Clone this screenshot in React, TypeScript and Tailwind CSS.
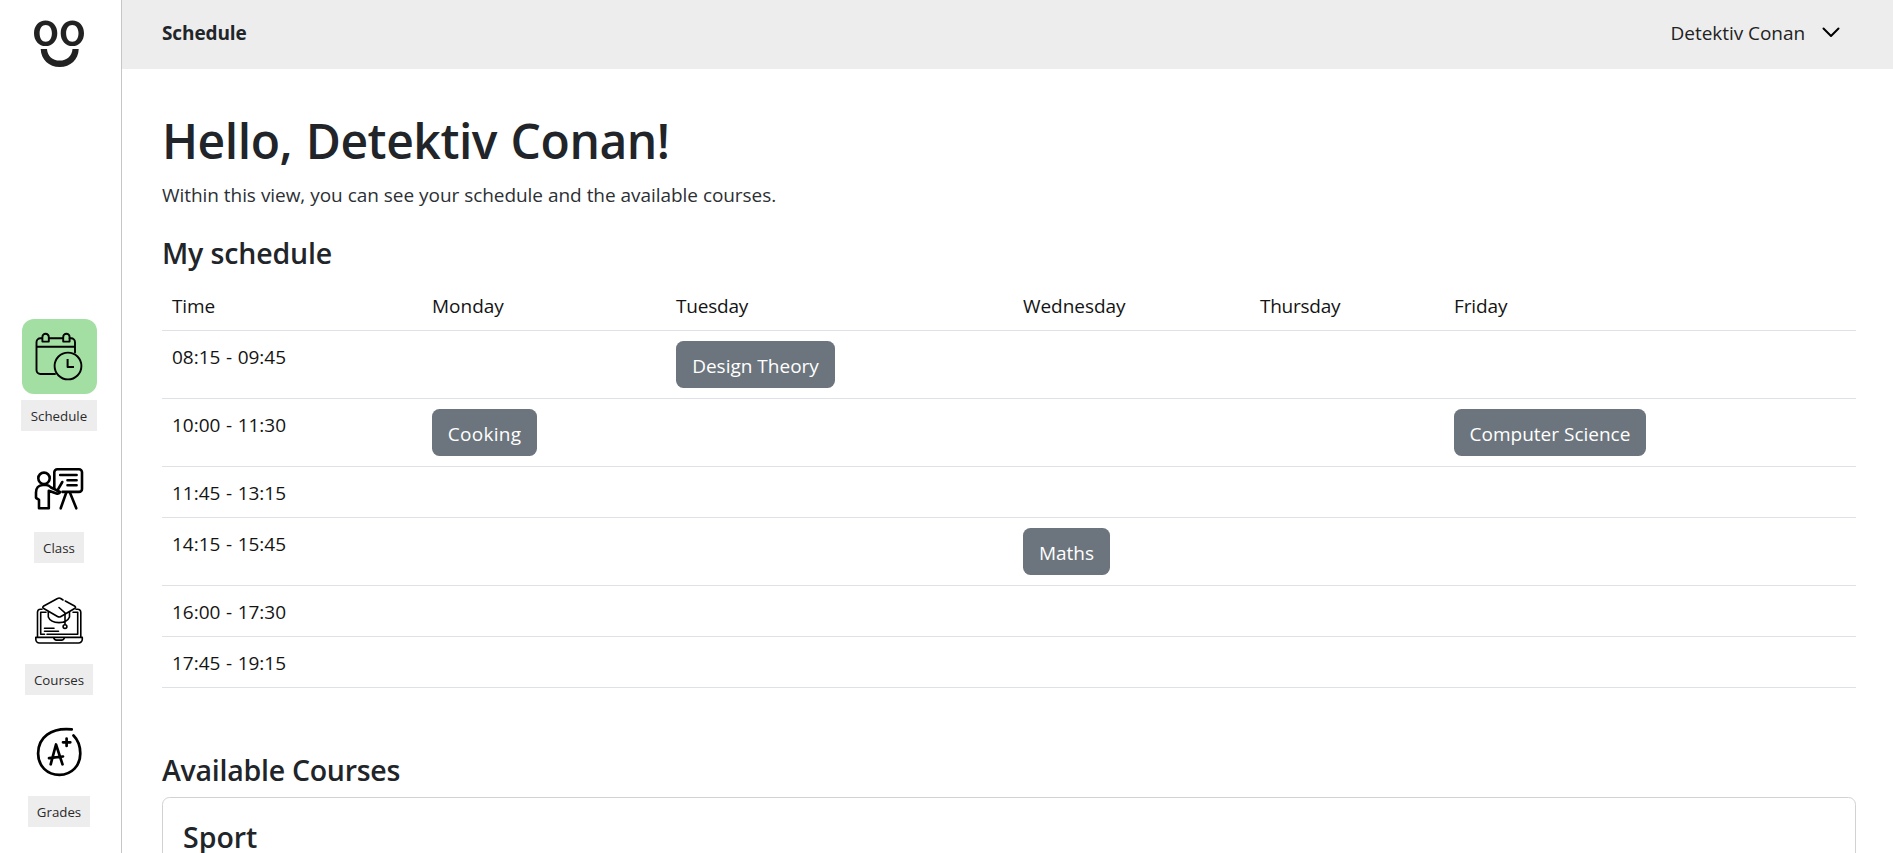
import type { ReactNode } from "react";

const stroke = {
  fill: "none",
  stroke: "currentColor",
  strokeLinecap: "round" as const,
  strokeLinejoin: "round" as const,
};

function Logo() {
  return (
    <svg width="50" height="47" viewBox="0 0 50 47" fill="#222" fillRule="evenodd">
      <path d="M11.6.5C18.400.5 23.300 5.800 23.300 13.200S18.400 26.100 11.600 26.100 0 20.600 0 13.200 4.800.5 11.600.5ZM11.700 4.900C8 4.900 5.600 8.200 5.600 13.200S8 21.700 11.700 21.700s6.200-3.500 6.200-8.500-2.500-8.300-6.200-8.300Z" />
      <path d="M38.400.5C45.200.5 50 5.800 50 13.200S45.200 26.100 38.400 26.100s-11.700-5.500-11.700-12.900S31.600.5 38.400.5ZM38.300 4.900c-3.700 0-6.200 3.300-6.200 8.300s2.500 8.500 6.200 8.500 6.200-3.500 6.200-8.500-2.500-8.300-6.200-8.300Z" />
      <path d="M6.700 29H13c.4 7 5.500 11.600 12.700 11.600S38 36 38.500 29h6.200C44.500 39.500 36.500 47 25.700 47S7 39.500 6.700 29Z" />
    </svg>
  );
}

function ScheduleIcon() {
  return (
    <svg width="75" height="75" viewBox="0 0 75 75" strokeWidth="1.900" {...stroke}>
      <path d="M20 19.300h-1.500a4 4 0 0 0-4 4V51a4 4 0 0 0 4 4h14.500M27 19.300h14M47.600 19.300h1.400a4 4 0 0 1 4 4V33.500M14.500 27.700H53" />
      <path d="M20.400 22.600v-4.600a3.200 3.200 0 0 1 6.400 0v4.600ZM41.200 22.600v-4.600a3.200 3.200 0 0 1 6.400 0v4.600Z" />
      <circle cx="46" cy="47" r="13.400" />
      <path d="M45.600 41v7H51" strokeWidth="2" strokeLinecap="square" />
    </svg>
  );
}

function ClassIcon() {
  return (
    <svg width="75" height="75" viewBox="0 0 75 75" strokeWidth="2.600" {...stroke}>
      <circle cx="22" cy="27.300" r="5.700" />
      <path d="M32.300 37.500V21.200a3 3 0 0 1 3-3H57a3 3 0 0 1 3 3v16.700a3 3 0 0 1-3 3H40.500" />
      <path d="M38.200 24h16.400M45.500 29.200h9.100M45.500 34.300h9.100M40.300 31l-5 8.700" />
      <path d="M44.200 41.800l-5.500 15.500M48 41.800l6.300 15.500" />
      <path d="M17 57.200h9.800V39.800l7.700 2.700c1.600.5 3.400-.2 3.500-1.700L29 36.500c-1.500-1.700-3-2.500-5-2.500h-3c-4.500 0-7 3.200-7 7.500v5.300l3 2Z" />
    </svg>
  );
}

function CoursesIcon() {
  return (
    <svg width="75" height="75" viewBox="0 0 75 75" strokeWidth="1.600" {...stroke}>
      <path d="M41 17l-2.300-1.500a3 3 0 0 0-3.200 0L21.300 23.300a1.200 1.200 0 0 0 0 2L35.500 33.500a3.500 3.500 0 0 0 3.500 0L53 25.300a1.200 1.200 0 0 0 0-2L43.300 18" />
      <path d="M26.300 28.700v5.300c1.500 3.800 5.700 5.600 10.700 5.600s9-1.800 10.500-5.600v-5.300M37 24.500l6 5.300v11.500" />
      <circle cx="43" cy="43.600" r="1.900" />
      <path d="M20 26.300h-1.500a3 3 0 0 0-3 3v25M54 26.300h1.800a3 3 0 0 1 3 3v25M24 29.300h-5.300v22h3.800M25 51.300h30.700v-22H51" />
      <path d="M22.500 45.200h9.500M22.500 48.200h14M13.800 54.400h46.500v1.800a3.800 3.800 0 0 1-3.800 3.800h-39a3.800 3.800 0 0 1-3.700-3.800ZM31.500 54.600c.5 1.700 1.500 2.500 3 2.500h5c1.500 0 2.600-.8 3-2.500" />
    </svg>
  );
}

function GradesIcon() {
  return (
    <svg width="75" height="75" viewBox="0 0 75 75" strokeWidth="2.700" {...stroke}>
      <path d="M49.700 14.400C29 12.400 16.100 22.500 16.100 38.500c0 12.500 9 21.300 21.400 21.300S58.300 50.500 58.300 38.500c0-7.500-2.300-13.500-6.800-18" />
      <path d="M28.700 49.300L34 29.500l6.500 19.800M27 43.200l14-1.700M44.600 23.500v7.400M41 27.300h7.300" />
    </svg>
  );
}

const nav: { label: string; icon: ReactNode; box: string; chip: string }[] = [
  { label: "Schedule", icon: <ScheduleIcon />, box: "bg-[#a3dfa2]", chip: "w-[76px]" },
  { label: "Class", icon: <ClassIcon />, box: "", chip: "w-[50px]" },
  { label: "Courses", icon: <CoursesIcon />, box: "", chip: "w-[68px]" },
  { label: "Grades", icon: <GradesIcon />, box: "", chip: "w-[62px]" },
];

const days = [
  { name: "Time", cls: "w-[260px] tracking-[-0.15px]" },
  { name: "Monday", cls: "w-[244px]" },
  { name: "Tuesday", cls: "w-[347px] tracking-[-0.2px]" },
  { name: "Wednesday", cls: "w-[237px] tracking-[-0.05px]" },
  { name: "Thursday", cls: "w-[194px] tracking-[-0.25px]" },
  { name: "Friday", cls: "w-[412px] tracking-[-0.1px]" },
];

type Lesson = { name: string; cls: string };
const rows: { time: string; lessons: Record<number, Lesson> }[] = [
  { time: "08:15 - 09:45", lessons: { 2: { name: "Design Theory", cls: "w-[159px]" } } },
  {
    time: "10:00 - 11:30",
    lessons: {
      1: { name: "Cooking", cls: "w-[105px] tracking-[0.3px]" },
      5: { name: "Computer Science", cls: "w-[192px]" },
    },
  },
  { time: "11:45 - 13:15", lessons: {} },
  { time: "14:15 - 15:45", lessons: { 3: { name: "Maths", cls: "w-[87px]" } } },
  { time: "16:00 - 17:30", lessons: {} },
  { time: "17:45 - 19:15", lessons: {} },
];

function Sidebar() {
  return (
    <aside className="flex w-[122px] shrink-0 flex-col items-center border-r border-[#c6c6c6] pr-[3px] pt-5 text-black">
      <Logo />
      <nav className="mt-[252px] flex flex-col items-center gap-5">
        {nav.map((n) => (
          <a key={n.label} className="flex flex-col items-center gap-1.5">
            <span className={`ml-px block size-[75px] rounded-xl ${n.box}`}>{n.icon}</span>
            <span
              className={`flex h-[31px] items-center justify-center bg-[#ededed] pt-px text-[13.3px] text-[#2a2a2a] ${n.chip}`}
            >
              {n.label}
            </span>
          </a>
        ))}
      </nav>
    </aside>
  );
}

function Timetable() {
  return (
    <table className="mt-[9px] w-[1694px] table-fixed border-separate border-spacing-0 text-[#141414]">
      <thead>
        <tr>
          {days.map((d) => (
            <th
              key={d.name}
              className={`border-b border-[#dee2e6] px-2.5 pb-[9px] pt-[11px] text-left font-normal ${d.cls}`}
            >
              {d.name}
            </th>
          ))}
        </tr>
      </thead>
      <tbody>
        {rows.map((r) => (
          <tr key={r.time}>
            <td className="border-b border-[#dee2e6] px-2.5 pb-[9px] pt-[11px] align-top [word-spacing:0.6px]">
              {r.time}
            </td>
            {days.slice(1).map((d, i) => {
              const lesson = r.lessons[i + 1];
              return (
                <td key={d.name} className="border-b border-[#dee2e6] p-2.5 align-top">
                  {lesson && (
                    <button
                      className={`flex h-[47px] items-start justify-center whitespace-nowrap rounded-[7.5px] bg-[#6c757d] pt-[10px] font-medium text-white ${lesson.cls}`}
                    >
                      {lesson.name}
                    </button>
                  )}
                </td>
              );
            })}
          </tr>
        ))}
      </tbody>
    </table>
  );
}

export default function App() {
  return (
    <div className="flex h-[853px] w-full overflow-hidden bg-white font-['Open_Sans','Segoe_UI',sans-serif] text-[19px] leading-[30px] text-[#212529]">
      <Sidebar />
      <div className="flex min-w-0 flex-1 flex-col">
        <header className="flex h-[69px] shrink-0 items-center justify-between bg-[#ededed] pb-[3px] pl-10 pr-[52px]">
          <span className="font-bold tracking-[-0.1px]">Schedule</span>
          <span className="flex items-center gap-4 tracking-[-0.05px] text-[#222]">
            Detektiv Conan
            <svg width="20" height="20" viewBox="0 0 20 20" fill="none" stroke="#000" strokeWidth="2" strokeLinecap="round" strokeLinejoin="round">
              <path d="M2.500 5.500l7.500 7.500 7.500-7.500" />
            </svg>
          </span>
        </header>
        <main className="flex flex-col pl-10 pt-[42px]">
          <h1 className="text-[48px] font-semibold leading-[60px] tracking-[-0.45px] [word-spacing:1.5px]">
            Hello, Detektiv Conan!
          </h1>
          <p className="mt-[9px] tracking-[-0.07px] text-[#2c3034] [word-spacing:0.2px]">
            Within this view, you can see your schedule and the available courses.
          </p>
          <h2 className="mt-[25px] text-[28.5px] font-semibold leading-9 tracking-[-0.15px]">My schedule</h2>
          <Timetable />
          <h2 className="mt-[64px] text-[28.5px] font-semibold leading-9 tracking-[-0.26px]">Available Courses</h2>
          <section className="mt-[9px] h-[200px] w-[1694px] rounded-[7.5px] border border-[#d2d2d2] px-5 pt-[21px]">
            <h3 className="text-[28.5px] font-semibold leading-9">Sport</h3>
          </section>
        </main>
      </div>
    </div>
  );
}
